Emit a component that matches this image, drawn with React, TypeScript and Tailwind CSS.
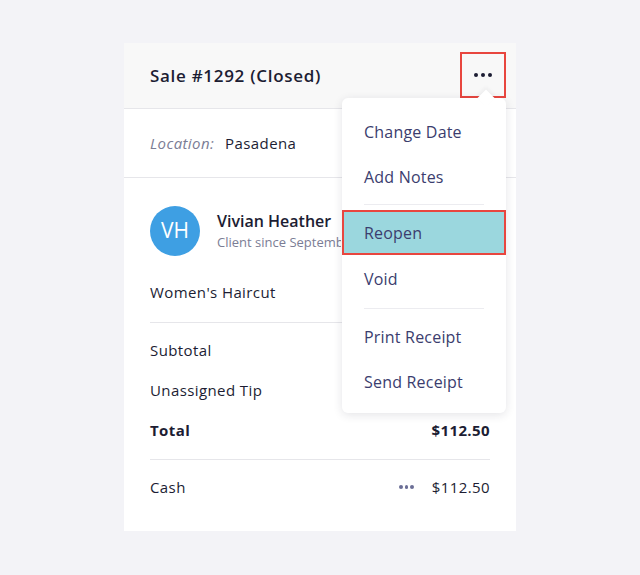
import React from "react";

const menuItems: { label: string; active?: boolean; dividerBefore?: boolean; tall?: boolean }[] = [
  { label: "Change Date" },
  { label: "Add Notes" },
  { label: "Reopen", active: true, dividerBefore: true },
  { label: "Void", tall: true },
  { label: "Print Receipt", dividerBefore: true },
  { label: "Send Receipt" },
];

const Dots = ({ className, dot }: { className: string; dot: string }) => (
  <div className={"flex items-center " + className}>
    <span className={"block rounded-full bg-current " + dot} />
    <span className={"block rounded-full bg-current " + dot} />
    <span className={"block rounded-full bg-current " + dot} />
  </div>
);

const App = () => {
  return (
    <div
      className="min-h-[575px] bg-[#f3f3f7] pt-[43px] text-[#1c1d33]"
      style={{ fontFamily: "'Open Sans', Lato, sans-serif" }}
    >
      <div className="relative mx-auto w-[392px] h-[488px] bg-white">
        {/* header */}
        <div className="h-[66px] flex items-center justify-between pl-[26px] pr-[10px] bg-[#f8f8f8] border-b border-[#e6e6ea]">
          <h1 className="text-[17px] font-semibold tracking-[0.7px]">Sale #1292 (Closed)</h1>
          <button className="w-[46px] h-[46px] mb-[2px] flex items-center justify-center border-2 border-[#e8463f]">
            <Dots className="text-[#1c1d33] gap-[3px]" dot="w-[4px] h-[4px]" />
          </button>
        </div>

        <div className="h-[69px] flex items-center px-[26px] border-b border-[#e6e6ea] text-[15px] tracking-[0.4px]">
          <span className="italic text-[#7b7d95]">Location:</span>
          <span className="ml-[11px]">Pasadena</span>
        </div>

        <div className="px-[26px] text-[15px] tracking-[0.4px]">
          <div className="flex items-center pt-[28px]">
            <div className="w-[50px] h-[50px] rounded-full bg-[#3e9fe3] text-white text-[21px] tracking-normal flex items-center justify-center">
              VH
            </div>
            <div className="ml-[17px] tracking-normal">
              <div className="text-[16px] font-semibold leading-[22px]">Vivian Heather</div>
              <div className="w-[124px] overflow-hidden whitespace-nowrap text-[13px] text-[#7b7d95] leading-[20px]">
                Client since September 2018
              </div>
            </div>
          </div>
          <div className="h-[60px] flex items-center pt-[12px]">Women's Haircut</div>
          <div className="border-t border-[#e6e6ea] mt-[6px]" />
          <div className="pt-[7px]">
            <div className="h-[40px] flex items-center">Subtotal</div>
            <div className="h-[40px] flex items-center">Unassigned Tip</div>
            <div className="h-[40px] flex items-center justify-between font-bold">
              <span>Total</span>
              <span>$112.50</span>
            </div>
          </div>
          <div className="border-t border-[#e6e6ea] mt-[9px]" />
          <div className="h-[54px] flex items-center justify-between">
            <span>Cash</span>
            <div className="flex items-center">
              <Dots className="text-[#6b6e96] gap-[2px]" dot="w-[3.5px] h-[3.5px]" />
              <span className="ml-[18px]">$112.50</span>
            </div>
          </div>
        </div>

        {/* dropdown */}
        <div className="absolute left-[218px] top-[55px] w-[164px] bg-white rounded-[6px] shadow-[0_2px_10px_rgba(30,30,60,0.12)] pt-[11px] pb-[9px]">
          <div className="absolute -top-[6px] right-[14px] w-[12px] h-[12px] bg-white rotate-45 shadow-[-2px_-2px_4px_rgba(30,30,60,0.05)]" />
          {menuItems.map((item) => (
            <div key={item.label}>
              {item.dividerBefore && <div className="mx-[22px] border-t border-[#ececf0] my-[5px]" />}
              <div
                className={
                  "flex items-center text-[16px] tracking-[0.2px] text-[#3b3d6e] " +
                  (item.tall ? "h-[48px] " : "h-[45px] ") +
                  (item.active ? "bg-[#9bd7de] border-2 border-[#e8463f] px-[20px]" : "px-[22px]")
                }
              >
                {item.label}
              </div>
            </div>
          ))}
        </div>
      </div>
    </div>
  );
};

export default App;
